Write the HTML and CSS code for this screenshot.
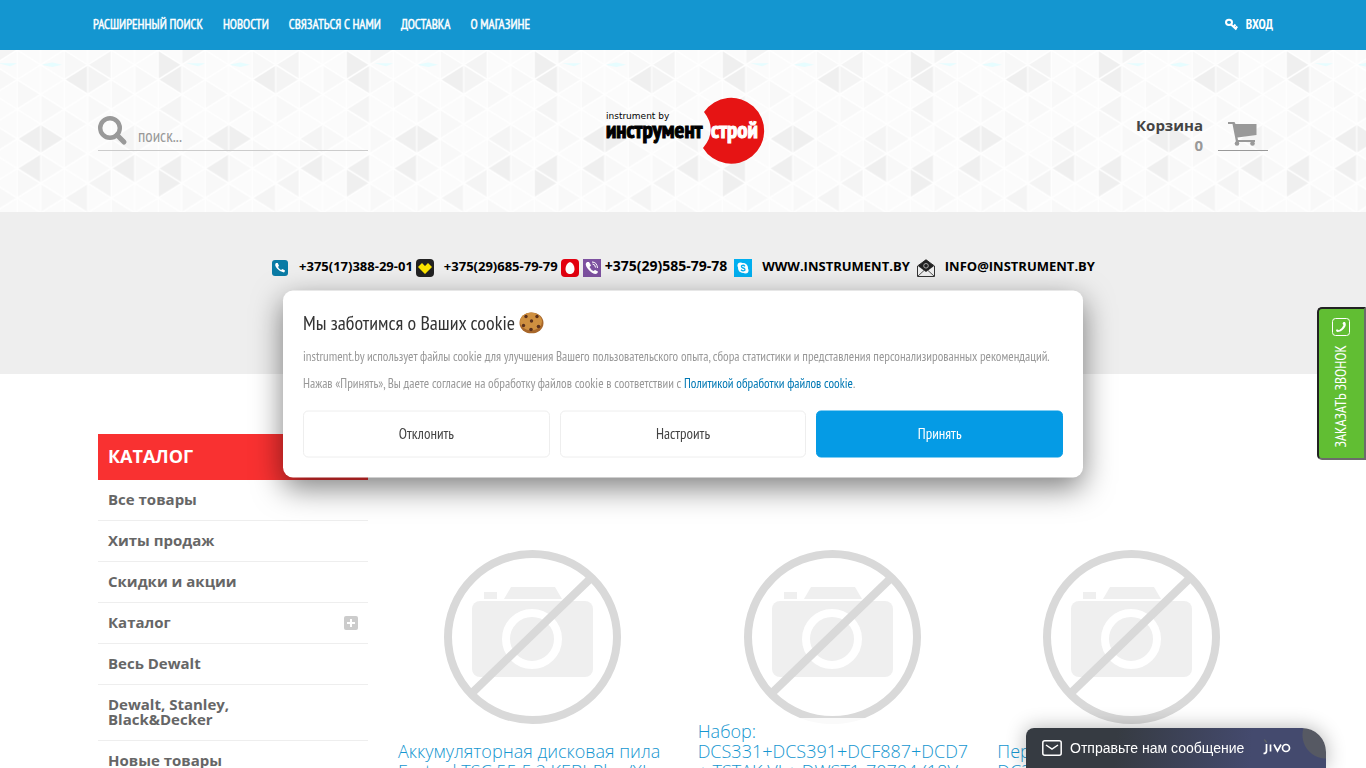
FILE: index.html
```
<!DOCTYPE html>
<html lang="ru">

<head>
    <meta charset="UTF-8">
    <meta name="viewport" content="width=device-width, initial-scale=1.0">
    <title>Инструментстрой</title>
    <link rel="stylesheet" href="styles.css">
</head>

<body>
    <svg class="defs" width="0" height="0" aria-hidden="true">
        <defs>
            <!-- one cell is a column wide and half a triangle high -->
            <pattern id="triangles" width="8" height="12" patternUnits="userSpaceOnUse" patternTransform="translate(87.7 0) scale(23.5 14.8)">
                <rect width="8" height="12" fill="#fbfbfb" />
                <path fill="#f8f8f8" d="M0 3l1 1l-1 1zM0 7l1 1l-1 1zM1 2l1 1l-1 1zM1 6l1 1l-1 1zM1 10l1 1l-1 1zM2 1l1 1l-1 1zM2 5l1 1l-1 1zM2 7l1 1l-1 1zM3 4l1 1l-1 1zM4 1l1 1l-1 1zM4 5l1 1l-1 1zM4 9l1 1l-1 1zM5 2l1 1l-1 1zM5 8l1 1l-1 1zM6 3l1 1l-1 1zM6 7l1 1l-1 1zM6 9l1 1l-1 1zM7 0l1 1l-1 1zM7 4l1 1l-1 1zM7 6l1 1l-1 1z" />
                <path fill="#f4f4f4" d="M0 1l1-1v2zM0 9l1-1v2zM4 -1l1 1l-1 1zM0 1l1 1l-1 1zM1 6l1-1v2zM7 10l1-1v2zM3 4l1-1v2z" />
                <path fill="#efefef" d="M3 0l1 1l-1 1zM3 2l1-1v2zM7 2l1-1v2zM5 6l1-1v2zM6 5l1 1l-1 1zM1 8l1-1v2zM3 8l1-1v2zM3 8l1 1l-1 1zM5 8l1-1v2z" />
                <path fill="#e6fdff" d="M4.200 .9h.8l-.3.2zM6 1l.5-.15.4.15-.4.15z" />
                <path stroke="#fff" stroke-width=".05" d="M0 0V12M1 0V12M2 0V12M3 0V12M4 0V12M5 0V12M6 0V12M7 0V12M8 0V12" />
                <g stroke="#fff" stroke-width=".09" fill="none">
                    <path d="M0 1L1 0M0 3L3 0M0 5L5 0M0 7L7 0M0 9L8 1M0 11L8 3M1 12L8 5M3 12L8 7M5 12L8 9M7 12L8 11" />
                    <path d="M7 0L8 1M5 0L8 3M3 0L8 5M1 0L8 7M0 1L8 9M0 3L8 11M0 5L7 12M0 7L5 12M0 9L3 12M0 11L1 12" />
                </g>
            </pattern>
            <symbol id="no-photo" viewBox="0 0 270 270">
                <g fill="#efefef">
                    <rect x="74" y="99" width="121" height="76" rx="8" />
                    <rect x="86" y="90" width="13" height="7" />
                    <path d="M106 97l7-12h44l7 12z" />
                </g>
                <circle cx="134" cy="137" r="26" fill="none" stroke="#fff" stroke-width="8" />
                <g fill="none" stroke="#d9d9d9" stroke-width="8">
                    <ellipse cx="134.500" cy="135" rx="84.500" ry="83" />
                    <path d="M74 191L193 76" />
                </g>
            </symbol>
        </defs>
    </svg>

    <nav class="topbar">
        <div class="container topbar-row">
            <ul class="menu">
                <li><a href="#">Расширенный поиск</a></li>
                <li><a href="#">Новости</a></li>
                <li><a href="#">Связаться с нами</a></li>
                <li><a href="#">Доставка</a></li>
                <li><a href="#">О магазине</a></li>
            </ul>
            <a class="login" href="#">
                <svg width="13" height="13" viewBox="0 0 13 13" fill="none" stroke="#fff">
                    <ellipse cx="4" cy="4.300" rx="3" ry="2.600" stroke-width="2" />
                    <path d="M6 6.500l5.500 5M8.500 8.800l2-2.300M10.300 10.500l2-2" stroke-width="2" />
                </svg>
                Вход
            </a>
        </div>
    </nav>

    <header class="header">
        <svg class="header-bg" width="100%" height="100%" aria-hidden="true">
            <rect width="100%" height="100%" fill="url(#triangles)" />
        </svg>
        <div class="container header-row">
            <form class="search">
                <button type="button" aria-label="Найти">
                    <svg width="30" height="30" viewBox="0 0 30 30" fill="none" stroke="#999">
                        <circle cx="12" cy="12" r="9.800" stroke-width="4.400" />
                        <path d="M19 19l7 7" stroke-width="5" stroke-linecap="round" />
                    </svg>
                </button>
                <input type="text" placeholder="поиск..." aria-label="поиск">
            </form>
            <a class="logo" href="#">
                <svg width="164" height="68" viewBox="-5 0 164 68">
                    <path d="M98 15A33 33 0 1 1 97 51Q112 33 98 15z" fill="#e61414" />
                    <text class="logo-small" x="0" y="22">instrument by</text>
                    <text class="logo-big" x="0" y="41">инструмент</text>
                    <text class="logo-big logo-white" x="105" y="41">строй</text>
                </svg>
            </a>
            <div class="cart">
                <div class="cart-text">
                    <div class="cart-title">Корзина</div>
                    <div>0</div>
                </div>
                <a class="cart-link" href="#" aria-label="Корзина">
                    <svg width="30" height="26" viewBox="0 0 30 26" fill="#999">
                        <path d="M0 1h6.500l1 2H28.500v11L9.500 16.500l.5 2.500H27v2H8L4.500 3H0z" />
                        <circle cx="9" cy="22.500" r="2.300" />
                        <circle cx="24.500" cy="22.500" r="2.300" />
                    </svg>
                </a>
            </div>
        </div>
    </header>

    <section class="contacts">
        <div class="contact">
            <svg width="18" height="18" viewBox="0 0 18 18">
                <rect x="1" y="1" width="16" height="16" rx="3" fill="#0a7ba5" />
                <path d="M5 4q-2 2 1 5.500t7 4q1-1 1-2l-2.500-1.500-1.500 1q-2-1-3-3l1-1.200L6.700 4z" fill="#fff" />
            </svg>
            <a href="#">+375(17)388-29-01</a>
        </div>
        <div class="contact">
            <svg width="18" height="18" viewBox="0 0 18 18">
                <rect width="18" height="18" rx="4" fill="#222" />
                <path d="M2 8l4-4 3 3 3-3 4 4-7 7z" fill="#fce500" />
            </svg>
            <a href="#">+375(29)685-79-79</a>
        </div>
        <div class="contact viber">
            <svg width="18" height="18" viewBox="0 0 18 18">
                <rect width="18" height="18" rx="4" fill="#e3000f" />
                <path d="M9 3c3 1 4.500 4 4.500 7S11.500 15 9 15s-4.500-2-4.500-5S6 4 9 3z" fill="#fff" />
            </svg>
            <svg width="18" height="18" viewBox="0 0 18 18">
                <rect width="18" height="18" fill="#7d51a0" />
                <path d="M4 3q-3 2 1 7t8 5q2-1 2-2.500L12 11l-1.500 1Q8 11 6.500 8L8 6.500 6 3z" fill="#fff" />
                <path d="M9 3q5 0 5.500 6M9.500 5q2.800 0 3 3.500" fill="none" stroke="#fff" />
            </svg>
            <a href="#">+375(29)585-79-78</a>
        </div>
        <div class="contact site">
            <svg width="18" height="18" viewBox="0 0 18 18">
                <rect width="18" height="18" fill="#00aff0" />
                <circle cx="9" cy="9" r="5" fill="#fff" />
                <circle cx="6.500" cy="6.500" r="3" fill="#fff" />
                <circle cx="11.500" cy="11.500" r="3" fill="#fff" />
                <path d="M11 7.300Q9.500 5.500 7.500 6.800 7 8.500 9.200 9t1.600 2.300Q9 12.700 7 10.800" fill="none" stroke="#00aff0" stroke-width="1.300" />
            </svg>
            <a href="#">WWW.INSTRUMENT.BY</a>
        </div>
        <div class="contact site">
            <svg width="18" height="18" viewBox="0 0 18 18">
                <path d="M.5 7L9 .8 17.500 7v10.500H.5z" fill="#eee" stroke="#333" />
                <path d="M1 7l8-6.500L17 7l-8 6z" fill="#222" />
                <path d="M1 17l6-5.500M17 17l-6-5.500" stroke="#555" />
                <circle cx="9" cy="6.800" r="2.300" fill="none" stroke="#aaa" />
            </svg>
            <a href="#">INFO@INSTRUMENT.BY</a>
        </div>
    </section>

    <main class="container content">
        <aside class="sidebar">
            <h2>КАТАЛОГ</h2>
            <ul>
                <li><a href="#">Все товары</a></li>
                <li><a href="#">Хиты продаж</a></li>
                <li><a href="#">Скидки и акции</a></li>
                <li>
                    <a href="#">Каталог</a>
                    <button type="button" aria-label="Развернуть">
                        <svg width="14" height="14" viewBox="0 0 14 14">
                            <rect width="14" height="14" rx="2" fill="#ccc" />
                            <path d="M7 3v8M3 7h8" stroke="#fff" stroke-width="2" />
                        </svg>
                    </button>
                </li>
                <li><a href="#">Весь Dewalt</a></li>
                <li><a href="#">Dewalt, Stanley,<br>Black&amp;Decker</a></li>
                <li><a href="#">Новые товары</a></li>
            </ul>
        </aside>
        <div class="products">
            <article class="product">
                <svg class="photo" width="270" height="270"><use href="#no-photo" /></svg>
                <a href="#">Аккумуляторная дисковая пила Festool TSC 55 5,2 KEBI-Plus/XL-SCA</a>
            </article>
            <article class="product">
                <svg class="photo" width="270" height="270"><use href="#no-photo" /></svg>
                <a href="#">Набор: DCS331+DCS391+DCF887+DCD7<br>+ TSTAK VI + DWST1-70704 (18V XR)</a>
            </article>
            <article class="product">
                <svg class="photo" width="270" height="270"><use href="#no-photo" /></svg>
                <a href="#">Перфоратор<br>DC330</a>
            </article>
        </div>
    </main>

    <button class="callback" type="button">
        <svg width="18" height="18" viewBox="0 0 18 18">
            <rect x=".5" y=".5" width="17" height="17" rx="3" fill="none" stroke="#fff" />
            <path d="M13 4q2 3-1 6.500t-7 3.500q-1-1-1-2l1-.7 2 1q3-1.500 4.500-5l-1-2 1-1.300z" fill="#fff" />
        </svg>
        <span>ЗАКАЗАТЬ ЗВОНОК</span>
    </button>

    <div class="cookie" role="dialog" aria-labelledby="cookie-title">
        <h3 id="cookie-title">Мы заботимся о Ваших cookie
            <svg width="25" height="22" viewBox="0 0 25 22">
                <ellipse cx="12.500" cy="11.500" rx="12" ry="10.500" fill="#a8672a" />
                <ellipse cx="12" cy="10" rx="11" ry="9" fill="#cf9040" />
                <g fill="#5a301c">
                    <circle cx="7" cy="5" r="1.700" />
                    <circle cx="18" cy="5" r="1.700" />
                    <circle cx="12.500" cy="9.500" r="1.700" />
                    <circle cx="4.500" cy="14" r="1.700" />
                    <circle cx="12" cy="18" r="1.800" />
                    <circle cx="19.500" cy="15" r="1.800" />
                </g>
            </svg>
        </h3>
        <p>instrument.by использует файлы cookie для улучшения Вашего пользовательского опыта, сбора статистики и представления персонализированных рекомендаций.</p>
        <p>Нажав «Принять», Вы даете согласие на обработку файлов cookie в соответствии с <a href="#">Политикой обработки файлов cookie</a>.</p>
        <div class="cookie-buttons">
            <button type="button">Отклонить</button>
            <button type="button">Настроить</button>
            <button type="button" class="accept">Принять</button>
        </div>
    </div>

    <button class="jivo" type="button">
        <svg width="20" height="16" viewBox="0 0 20 16" fill="none" stroke="#fff" stroke-width="1.500">
            <rect x=".8" y=".8" width="18.400" height="14.400" rx="2" />
            <path d="M4 5l6 4 6-4" />
        </svg>
        <span>Отправьте нам сообщение</span>
        <svg class="jivo-logo" width="28" height="18" viewBox="0 0 28 18" fill="none" stroke="#fff" stroke-width="1.700">
            <path d="M3.500 5v7q0 2.500-3 2.500M7.500 5.500v7M11 5.500l3.500 6.500L18 5.500" />
            <circle cx="23" cy="9" r="3.500" />
            <path d="M1 0q3 1 3 4-3-1-3-4z" fill="#5b6066" stroke="none" />
        </svg>
    </button>
</body>

</html>
```
FILE: styles.css
```
* {
    box-sizing: border-box;
}

body {
    margin: 0;
    overflow: hidden;
    background: #fff;
    color: #666;
    font-family: "Open Sans", sans-serif;
    font-size: 15px;
}

a {
    color: inherit;
    text-decoration: none;
}

ul {
    list-style: none;
    margin: 0;
    padding: 0;
}

button {
    font-family: inherit;
    cursor: pointer;
}

svg {
    display: block;
    flex: none;
}

.defs {
    position: absolute;
}

.container {
    max-width: 1170px;
    margin: 0 auto;
}

/* top menu */

.topbar {
    background: #1496d0;
    color: #fff;
    font-family: "PT Sans Narrow", "Open Sans", sans-serif;
    font-size: 13px;
    text-transform: uppercase;
}

.topbar-row {
    display: flex;
    justify-content: space-between;
    align-items: center;
    height: 50px;
    max-width: 1180px;
    padding-bottom: 1px;
}

.menu {
    display: flex;
    gap: 20px;
    -webkit-text-stroke: .4px #fff;
}

.login {
    display: flex;
    align-items: center;
    gap: 8px;
    font-weight: bold;
}

/* header */

.header {
    position: relative;
    padding: 46px 0;
}

.header-bg {
    position: absolute;
    top: 0;
    left: 0;
}

.header-row {
    position: relative;
    display: grid;
    grid-template-columns: 1fr auto 1fr;
    align-items: center;
    height: 70px;
}

.search {
    display: flex;
    align-items: flex-end;
    width: 270px;
    height: 40px;
    border-bottom: 1px solid #ccc;
    gap: 10px;
}

.search button {
    padding: 0 0 4px;
    border: none;
    background: none;
}

.search input {
    width: 200px;
    padding: 0 0 3px;
    border: none;
    outline: none;
    background: none;
    font-family: "PT Sans Narrow", "Open Sans", sans-serif;
    font-size: 17px;
}

.search input::placeholder {
    color: #999;
}

.logo-small {
    font: 9px "DejaVu Sans", sans-serif;
}

.logo-big {
    font: bold 23px "PT Sans Narrow", "Open Sans", sans-serif;
    stroke: #000;
}

.logo-white {
    fill: #fff;
    stroke: #fff;
}

.cart {
    display: flex;
    justify-content: flex-end;
    gap: 15px;
    height: 40px;
    color: #999;
    font-weight: bold;
    line-height: 20px;
    text-align: right;
}

.cart-text {
    padding-top: 4px;
}

.cart-title {
    color: #444;
}

.cart-link {
    display: flex;
    justify-content: center;
    align-items: flex-end;
    width: 50px;
    padding-bottom: 3px;
    border-bottom: 1px solid #999;
}

/* contacts */

.contacts {
    display: flex;
    justify-content: center;
    align-items: flex-start;
    gap: 3px;
    min-height: 162px;
    padding-top: 45px;
    background: #eee;
    color: #000;
    font-size: 13px;
    font-weight: bold;
    line-height: 18px;
}

.contact {
    display: flex;
    gap: 10px;
}

.contact svg {
    margin-top: 2px;
}

.viber {
    gap: 4px;
    font-size: 14px;
}

.site {
    margin-left: 4px;
}

/* content */

.content {
    display: flex;
    gap: 30px;
    padding-top: 60px;
}

.sidebar {
    flex: 0 0 270px;
}

.sidebar h2 {
    margin: 0;
    padding: 0 10px 2px;
    background: #f93131;
    color: #fff;
    font-size: 18px;
    line-height: 44px;
}

.sidebar li {
    display: flex;
    justify-content: space-between;
    align-items: center;
    padding: 12px 10px 13px;
    border-bottom: 1px solid #eee;
    font-weight: bold;
    line-height: 15px;
}

.sidebar button {
    padding: 0;
    border: none;
    background: none;
}

.products {
    flex: 1;
    display: grid;
    grid-template-columns: repeat(3, 1fr);
    gap: 29px;
    padding-top: 68px;
}

.product {
    display: grid;
    min-height: 299px;
}

.photo,
.product a {
    grid-area: 1 / 1;
}

.product a {
    align-self: end;
    min-height: 63px;
    padding-top: 3px;
    background: rgba(255, 255, 255, .85);
    color: #1496d0;
    font-size: 18px;
    font-weight: 300;
    line-height: 20px;
}

/* callback button */

.callback {
    position: fixed;
    top: 307px;
    right: 0;
    display: flex;
    flex-direction: column;
    align-items: center;
    gap: 9px;
    width: 49px;
    padding: 9px 2px 10px 0;
    border: 2px solid;
    border-color: #222 #6b6b6b #6b6b6b #222;
    border-radius: 5px 0 0 5px;
    background: #61be33;
    color: #fff;
    font-family: "PT Sans Narrow", "Open Sans", sans-serif;
    font-size: 15px;
}

.callback span {
    writing-mode: vertical-rl;
    transform: rotate(180deg);
}

/* cookie window */

.cookie {
    position: fixed;
    top: 50%;
    left: 50%;
    width: 800px;
    max-width: 100%;
    padding: 20px;
    border-radius: 10px;
    background: #fff;
    box-shadow: 0 10px 30px rgba(0, 0, 0, .5);
    color: #999;
    font-family: "PT Sans Narrow", "Open Sans", sans-serif;
    transform: translate(-50%, -50%);
}

.cookie h3 {
    display: flex;
    align-items: center;
    gap: 4px;
    margin: 0 0 12px;
    color: #333;
    font-size: 20px;
    font-weight: normal;
    line-height: 24px;
}

.cookie p {
    margin: 0 0 7px;
    font-size: 13px;
    line-height: 20px;
}

.cookie p a {
    color: #0078b4;
}

.cookie-buttons {
    display: flex;
    gap: 10px;
    margin-top: 17px;
}

.cookie-buttons button {
    flex: 1;
    height: 47px;
    padding-bottom: 3px;
    border: 1px solid #eee;
    border-radius: 5px;
    background: #fff;
    color: #444;
    font-size: 15px;
}

.cookie-buttons .accept {
    border-color: #059be5;
    background: #059be5;
    color: #fff;
}

/* chat */

.jivo {
    position: fixed;
    right: 40px;
    bottom: 0;
    display: flex;
    align-items: center;
    width: 300px;
    height: 40px;
    padding: 0 16px;
    border: none;
    border-radius: 8px 24px 0 0;
    background: radial-gradient(circle at 300px 7px, #565963 23px, transparent 24px), linear-gradient(95deg, #363b42 30%, #444a6e 75%);
    box-shadow: 0 0 20px rgba(0, 0, 0, .3);
    color: #fff;
    font-family: "Liberation Sans", Arial, sans-serif;
    font-size: 14px;
    gap: 8px;
}

.jivo-logo {
    margin-left: 11px;
}
```
